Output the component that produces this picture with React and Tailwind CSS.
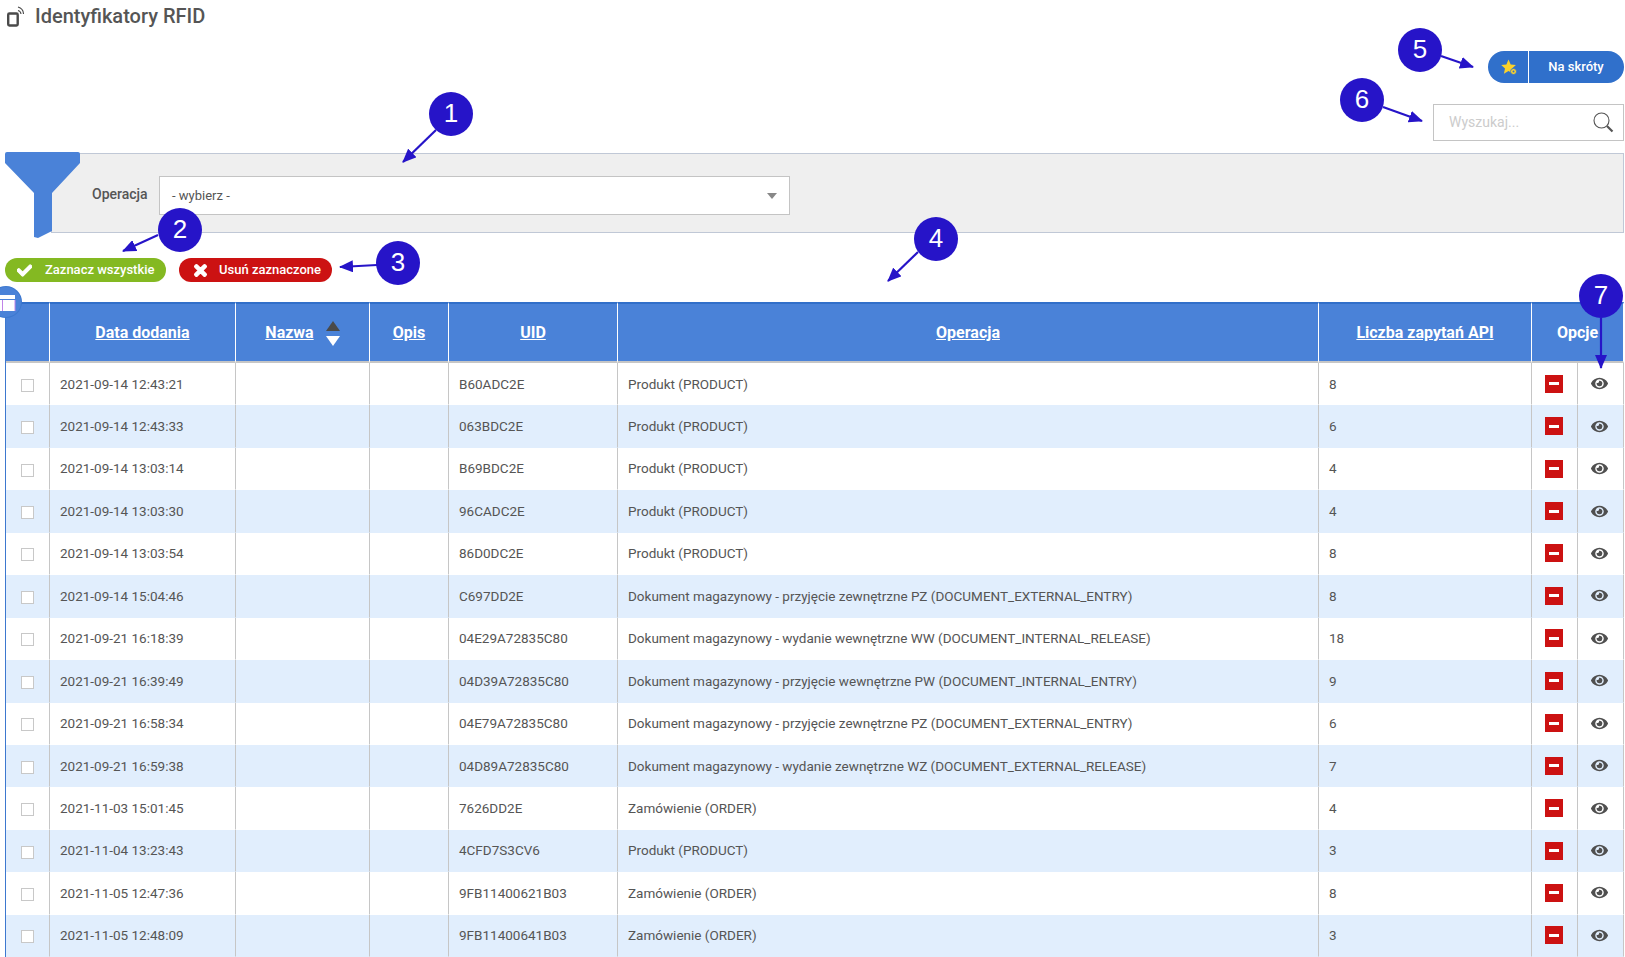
import React from 'react'
import { FaCheck, FaTimes, FaEye } from 'react-icons/fa'

const ROWS = [
  ['2021-09-14 12:43:21', 'B60ADC2E', 'Produkt (PRODUCT)', '8'],
  ['2021-09-14 12:43:33', '063BDC2E', 'Produkt (PRODUCT)', '6'],
  ['2021-09-14 13:03:14', 'B69BDC2E', 'Produkt (PRODUCT)', '4'],
  ['2021-09-14 13:03:30', '96CADC2E', 'Produkt (PRODUCT)', '4'],
  ['2021-09-14 13:03:54', '86D0DC2E', 'Produkt (PRODUCT)', '8'],
  ['2021-09-14 15:04:46', 'C697DD2E', 'Dokument magazynowy - przyjęcie zewnętrzne PZ (DOCUMENT_EXTERNAL_ENTRY)', '8'],
  ['2021-09-21 16:18:39', '04E29A72835C80', 'Dokument magazynowy - wydanie wewnętrzne WW (DOCUMENT_INTERNAL_RELEASE)', '18'],
  ['2021-09-21 16:39:49', '04D39A72835C80', 'Dokument magazynowy - przyjęcie wewnętrzne PW (DOCUMENT_INTERNAL_ENTRY)', '9'],
  ['2021-09-21 16:58:34', '04E79A72835C80', 'Dokument magazynowy - przyjęcie zewnętrzne PZ (DOCUMENT_EXTERNAL_ENTRY)', '6'],
  ['2021-09-21 16:59:38', '04D89A72835C80', 'Dokument magazynowy - wydanie zewnętrzne WZ (DOCUMENT_EXTERNAL_RELEASE)', '7'],
  ['2021-11-03 15:01:45', '7626DD2E', 'Zamówienie (ORDER)', '4'],
  ['2021-11-04 13:23:43', '4CFD7S3CV6', 'Produkt (PRODUCT)', '3'],
  ['2021-11-05 12:47:36', '9FB11400621B03', 'Zamówienie (ORDER)', '8'],
  ['2021-11-05 12:48:09', '9FB11400641B03', 'Zamówienie (ORDER)', '3'],
]

const TH = 'border-r border-r-white border-t-2 border-t-[#316fc9] border-b-2 border-b-[#c6c6c6] p-0 text-center text-[16px] font-bold text-white'
const TD = 'border-r border-r-[#c6c6c6] border-b border-b-transparent px-[10px] py-0 text-[13.5px] font-normal text-[#555555]'

function Marker({ className, children }) {
  return (
    <div className={`absolute flex h-[44px] w-[44px] items-center justify-center rounded-full bg-[#2614c8] pb-[2px] font-['Liberation_Sans',sans-serif] text-[26px] text-white ${className}`}>
      {children}
    </div>
  )
}

function Arrow({ x1, y1, x2, y2 }) {
  return <line x1={x1} y1={y1} x2={x2} y2={y2} stroke="#2614c8" strokeWidth="2.2" markerEnd="url(#arrowhead)" />
}

export default function App() {
  return (
    <div className="relative h-[957px] w-full overflow-hidden bg-white font-['Roboto',sans-serif] text-[#555555]">
      {/* Title */}
      <div className="flex h-[32px] items-center pl-[7px]">
        <svg width="17" height="21" viewBox="0 0 17 21" fill="none" className="mt-[1px]">
          <rect x="1.2" y="7.5" width="9.5" height="12" rx="1.2" stroke="#4a4a4a" strokeWidth="2.4" />
          <path d="M11 4.5a4 4 0 0 1 3 3.5M11 1a7.5 7.5 0 0 1 5.5 7" stroke="#4a4a4a" strokeWidth="1.1" />
        </svg>
        <h1 className="ml-[11px] text-[20px] font-medium text-[#555555]">Identyfikatory RFID</h1>
      </div>

      {/* Shortcuts */}
      <div className="mt-[19px] flex justify-end pr-[1px]">
        <button className="flex h-[32px] w-[136px] items-center rounded-full bg-[#3070cb] text-[13px] font-medium text-white">
          <span className="flex h-full w-[41px] items-center justify-center border-r border-r-white pl-[2px]">
            <svg width="17" height="17" viewBox="0 0 17 17">
              <path d="M7.5 0.5l2.2 4.9 5.2.6-3.9 3.5 1.1 5.2-4.6-2.7-4.6 2.7 1.1-5.2L.2 6l5.2-.6z" fill="#fbd22b" />
              <circle cx="12.5" cy="12.5" r="3" fill="#fbd22b" stroke="#3070cb" strokeWidth="0.8" />
              <circle cx="12.5" cy="12.5" r="1" fill="#3070cb" />
            </svg>
          </span>
          <span className="flex-1 pr-[1px] text-center">Na skróty</span>
        </button>
      </div>

      {/* Search */}
      <div className="mt-[21px] flex justify-end pr-[1px]">
        <div className="flex h-[37px] w-[191px] items-center justify-between border border-[#c4c4c4] pl-[15px] pr-[9px]">
          <span className="text-[14px] text-[#cccccc]">Wyszukaj...</span>
          <svg width="21" height="21" viewBox="0 0 21 21" fill="none">
            <circle cx="8.5" cy="8.5" r="7.5" stroke="#555555" strokeWidth="1.1" />
            <path d="M14 14l5.5 5.5" stroke="#555555" strokeWidth="2.2" />
          </svg>
        </div>
      </div>

      {/* Filter */}
      <div className="relative ml-[51px] mr-[1px] mt-[12px] flex h-[80px] items-center border border-[#c0c8d6] bg-[#efefef] pb-[1px] pl-[40px] pt-[6px]">
        <svg width="76" height="87" viewBox="0 0 76 87" className="absolute left-[-47px] top-[-2px]">
          <path d="M0 2a2 2 0 0 1 2-2h71a2 2 0 0 1 2 2v9L47 41v38l-14 7-4-1V41L0 11z" fill="#4a82d8" />
        </svg>
        <span className="mb-[2px] w-[67px] text-[14px] font-medium text-[#555555]">Operacja</span>
        <div className="flex h-[39px] w-[631px] items-center justify-between border border-[#c4c4c4] bg-white pl-[12px] pr-[12px]">
          <span className="text-[13px] text-[#555555]">- wybierz -</span>
          <span className="h-0 w-0 border-x-[5px] border-t-[6px] border-x-transparent border-t-[#888888]" />
        </div>
      </div>

      {/* Bulk actions */}
      <div className="ml-[5px] mt-[25px] flex h-[24px] gap-[13px]">
        <button className="flex h-[24px] w-[161px] items-center rounded-full bg-[#84b922] pl-[12px] text-[13px] font-medium text-white">
          <FaCheck size={15} stroke="currentColor" strokeWidth={40} />
          <span className="ml-[13px]">Zaznacz wszystkie</span>
        </button>
        <button className="flex h-[24px] w-[153px] items-center rounded-full bg-[#cc1212] pl-[13px] text-[13px] font-medium text-white">
          <FaTimes size={17} stroke="currentColor" strokeWidth={40} />
          <span className="ml-[10px]">Usuń zaznaczone</span>
        </button>
      </div>

      {/* Table */}
      <div className="relative ml-[5px] mt-[20px] w-[1619px]">
        <table className="w-full table-fixed border-separate border-spacing-0 border-l border-l-[#3d78cf]">
          <colgroup>
            <col className="w-[44px]" />
            <col className="w-[186px]" />
            <col className="w-[134px]" />
            <col className="w-[79px]" />
            <col className="w-[169px]" />
            <col className="w-[701px]" />
            <col className="w-[213px]" />
            <col className="w-[46px]" />
            <col className="w-[46px]" />
          </colgroup>
          <thead>
            <tr className="h-[61px] bg-[#4a82d8]">
              <th className={TH} />
              <th className={TH}><span className="underline">Data dodania</span></th>
              <th className={TH}>
                <div className="flex items-center justify-center gap-[12px] pt-[1px]">
                  <span className="underline">Nazwa</span>
                  <span className="flex flex-col gap-[5px]">
                    <span className="h-0 w-0 border-x-[7px] border-b-[10px] border-x-transparent border-b-[#4a4a4a]" />
                    <span className="h-0 w-0 border-x-[7px] border-t-[10px] border-x-transparent border-t-white" />
                  </span>
                </div>
              </th>
              <th className={TH}><span className="underline">Opis</span></th>
              <th className={TH}><span className="underline">UID</span></th>
              <th className={TH}><span className="underline">Operacja</span></th>
              <th className={TH}><span className="underline">Liczba zapytań API</span></th>
              <th colSpan={2} className={TH}>Opcje</th>
            </tr>
          </thead>
          <tbody>
            {ROWS.map((r, i) => (
              <tr key={r[0]} className={i % 2 ? 'h-[42.45px] bg-[#e1eefd]' : 'h-[42.45px] bg-white'}>
                <td className={TD}>
                  <span className="ml-[5px] mt-[3px] block h-[13px] w-[13px] border border-[#c8c8c8] bg-white" />
                </td>
                <td className={TD}>{r[0]}</td>
                <td className={TD} />
                <td className={TD} />
                <td className={TD}>{r[1]}</td>
                <td className={TD}>{r[2]}</td>
                <td className={TD}>{r[3]}</td>
                <td className="border-r border-b border-r-[#c6c6c6] border-b-transparent px-[13px]">
                  <span className="flex h-[18px] w-[18px] items-center justify-center bg-[#cc1212]">
                    <span className="h-[3px] w-[10px] bg-white" />
                  </span>
                </td>
                <td className="border-r border-b border-r-[#c6c6c6] border-b-transparent px-[13px]">
                  <FaEye size={17} className="text-[#4f4f4f]" />
                </td>
              </tr>
            ))}
          </tbody>
        </table>

        {/* Column chooser */}
        <div className="absolute left-[-14px] top-[-15px] flex h-[30px] w-[30px] items-center justify-center rounded-full bg-[#4a82d8] shadow-[0_0_0_1px_#3d78cf]">
          <svg width="30" height="30" viewBox="0 0 30 30">
            <rect x="9" y="8" width="15" height="4" fill="#ffffff" />
            <rect x="12" y="13" width="12" height="11" fill="#ffffff" />
            <rect x="9" y="13" width="2" height="11" fill="#ffffff" />
            <path d="M11.5 13v11M24 13v11" stroke="#c084e8" />
          </svg>
        </div>
      </div>

      {/* Annotations */}
      <svg className="pointer-events-none absolute left-0 top-0" width="1625" height="957">
        <defs>
          <marker id="arrowhead" markerUnits="userSpaceOnUse" markerWidth="14" markerHeight="12" refX="13" refY="6" orient="auto">
            <path d="M0 0L14 6L0 12z" fill="#2614c8" />
          </marker>
        </defs>
        <Arrow x1={436} y1={130} x2={403} y2={162} />
        <Arrow x1={158} y1={235} x2={123} y2={251} />
        <Arrow x1={377} y1={265} x2={340} y2={267} />
        <Arrow x1={918} y1={252} x2={888} y2={281} />
        <Arrow x1={1441} y1={56} x2={1473} y2={67} />
        <Arrow x1={1383} y1={107} x2={1422} y2={121} />
        <Arrow x1={1601} y1={318} x2={1601} y2={368} />
      </svg>
      <Marker className="left-[429px] top-[92px]">1</Marker>
      <Marker className="left-[158px] top-[208px]">2</Marker>
      <Marker className="left-[376px] top-[241px]">3</Marker>
      <Marker className="left-[914px] top-[217px]">4</Marker>
      <Marker className="left-[1398px] top-[28px]">5</Marker>
      <Marker className="left-[1340px] top-[78px]">6</Marker>
      <Marker className="left-[1579px] top-[274px]">7</Marker>
    </div>
  )
}
